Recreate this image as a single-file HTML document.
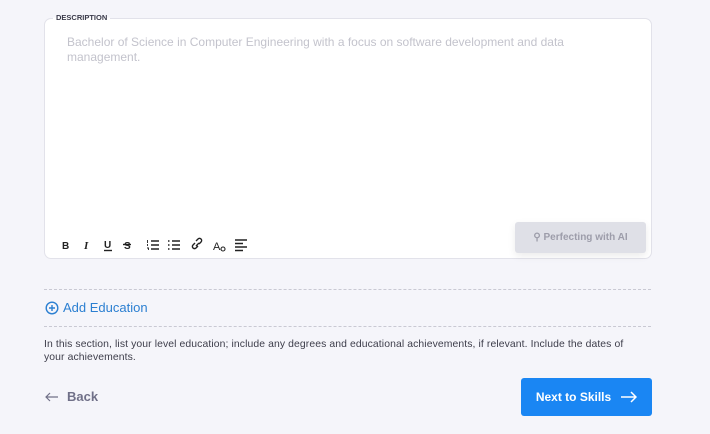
<!DOCTYPE html>
<html><head><style>
body{margin:0;width:710px;height:434px;background:#f5f5fa;font-family:"Liberation Sans",sans-serif;position:relative;overflow:hidden}
.card{position:absolute;left:44px;top:18px;width:606px;height:239px;background:#fff;border:1px solid #e2e2ea;border-radius:7px}
.lbl{position:absolute;left:53px;top:13px;padding:0 3px;font-size:7.5px;font-weight:bold;color:#3a3a4a;background:linear-gradient(#f5f5fa 50%,#fff 50%)}
.ph{position:absolute;left:67px;top:35px;width:560px;font-size:12px;line-height:15px;color:#c3c3cc}
.tb{position:absolute;left:60px;top:237px}
.ai{position:absolute;left:515px;top:222px;width:131px;height:31px;background:#dfe0e7;border-radius:3px;box-shadow:0 3px 8px rgba(0,0,0,.08);font-size:10px;font-weight:bold;color:#9d9daa;text-align:center;line-height:31px}
.dash{position:absolute;left:44px;width:607px;border-top:1px dashed #c9c9d3}
.add{position:absolute;left:45px;top:300px;font-size:13px;color:#2b7fd1;display:flex;align-items:center;gap:4px}
.help{position:absolute;left:44px;top:338px;width:640px;font-size:10.4px;line-height:13px;color:#3d3d4a;letter-spacing:0.1px;white-space:nowrap}
.back{position:absolute;left:45px;top:389px;font-size:13px;font-weight:bold;color:#707088;display:flex;align-items:center;gap:8px}
.next{position:absolute;left:521px;top:378px;width:131px;height:38px;background:#1a86f3;border-radius:3px;color:#fff;font-size:12px;font-weight:bold;display:flex;align-items:center;justify-content:center;gap:9px}
</style></head><body>
<div class="card"></div>
<div class="lbl">DESCRIPTION</div>
<div class="ph">Bachelor of Science in Computer Engineering with a focus on software development and data management.</div>
<svg class="tb" width="200" height="16" viewBox="0 0 200 16" fill="none" stroke="#222" stroke-width="1.4">
<text x="2" y="12" font-size="10" font-weight="bold" fill="#222" stroke="none" font-family="Liberation Sans">B</text>
<text x="24" y="12" font-size="11" font-style="italic" font-weight="bold" fill="#222" stroke="none" font-family="Liberation Serif">I</text>
<text x="44" y="11" font-size="10" font-weight="bold" fill="#222" stroke="none" font-family="Liberation Sans">U</text>
<path d="M44 13.5h8"/>
<text x="64" y="12" font-size="10" font-weight="bold" fill="#222" stroke="none" font-family="Liberation Sans">S</text>
<path d="M63 7.5h8"/>
<path d="M91 4h8M91 8h8M91 12h8" /><path d="M87.5 3v3M87.5 7v2M87 11h1.5v2" stroke-width="0.9"/>
<path d="M112 4h8M112 8h8M112 12h8"/><path d="M108 4h1.5M108 8h1.5M108 12h1.5" stroke-width="1.6"/>
<path d="M138 9l-2 2a2 2 0 0 1-3-3l2-2M139 7l2-2a2 2 0 0 0-3-3l-2 2M136 9l3-3"/>
<text x="153" y="13" font-size="11" fill="#222" stroke="none" font-family="Liberation Sans">A</text>
<circle cx="163" cy="12" r="2" stroke-width="1.1"/>
<path d="M175 3h12M175 6.5h8M175 10h12M175 13.5h8"/>
</svg>
<div class="ai">⚲ Perfecting with AI</div>
<div class="dash" style="top:289px"></div>
<div class="add"><svg width="14" height="14" viewBox="0 0 14 14"><circle cx="7" cy="7" r="5.8" fill="none" stroke="#2b7fd1" stroke-width="1.4"/><path d="M7 4v6M4 7h6" stroke="#2b7fd1" stroke-width="1.4"/></svg>Add Education</div>
<div class="dash" style="top:326px"></div>
<div class="help">In this section, list your level education; include any degrees and educational achievements, if relevant. Include the dates of<br>your achievements.</div>
<div class="back"><svg width="14" height="10" viewBox="0 0 14 10" fill="none" stroke="#707088" stroke-width="1.2"><path d="M13 5H1M5 1L1 5l4 4"/></svg>Back</div>
<div class="next">Next to Skills<svg width="17" height="12" viewBox="0 0 17 12" fill="none" stroke="#fff" stroke-width="1.5"><path d="M1 6h15M11 1l5 5-5 5"/></svg></div>
</body></html>
